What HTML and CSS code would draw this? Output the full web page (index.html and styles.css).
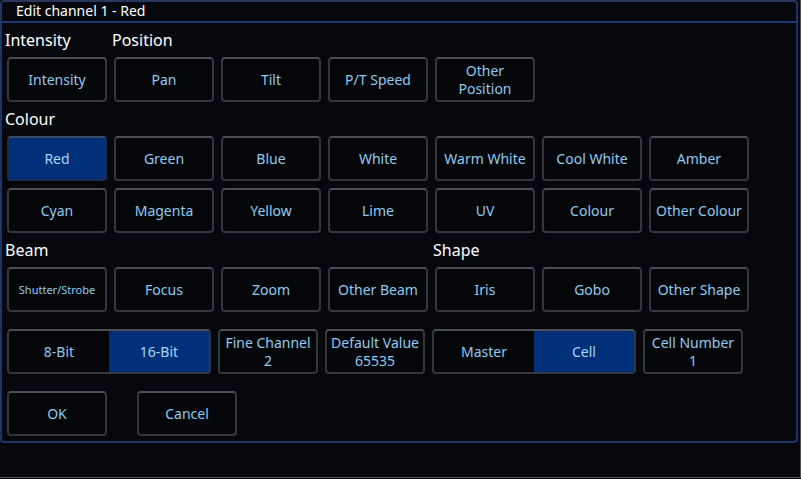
FILE: index.html
```html
<!DOCTYPE html>
<html>
<head>
<meta charset="utf-8">
<link rel="stylesheet" href="styles.css">
</head>
<body>
<div class="window">
  <div class="dialog">
    <div class="titlebar">Edit channel 1 - Red</div>
    <div class="content">
      <div class="grid labels">
        <div class="label">Intensity</div>
        <div class="label">Position</div>
      </div>
      <div class="grid">
        <button class="btn">Intensity</button>
        <button class="btn">Pan</button>
        <button class="btn">Tilt</button>
        <button class="btn">P/T Speed</button>
        <button class="btn two">Other<br>Position</button>
      </div>
      <div class="grid labels">
        <div class="label">Colour</div>
      </div>
      <div class="grid">
        <button class="btn active">Red</button>
        <button class="btn">Green</button>
        <button class="btn">Blue</button>
        <button class="btn">White</button>
        <button class="btn">Warm White</button>
        <button class="btn">Cool White</button>
        <button class="btn">Amber</button>
      </div>
      <div class="grid row2">
        <button class="btn">Cyan</button>
        <button class="btn">Magenta</button>
        <button class="btn">Yellow</button>
        <button class="btn">Lime</button>
        <button class="btn">UV</button>
        <button class="btn">Colour</button>
        <button class="btn">Other Colour</button>
      </div>
      <div class="grid labels">
        <div class="label span4">Beam</div>
        <div class="label">Shape</div>
      </div>
      <div class="grid">
        <button class="btn small">Shutter/Strobe</button>
        <button class="btn">Focus</button>
        <button class="btn">Zoom</button>
        <button class="btn">Other Beam</button>
        <button class="btn">Iris</button>
        <button class="btn">Gobo</button>
        <button class="btn">Other Shape</button>
      </div>
      <div class="row options">
        <div class="segment">
          <div class="seg">8-Bit</div>
          <div class="seg on">16-Bit</div>
        </div>
        <button class="btn two">Fine Channel<br>2</button>
        <button class="btn two">Default Value<br>65535</button>
        <div class="segment">
          <div class="seg">Master</div>
          <div class="seg on">Cell</div>
        </div>
        <button class="btn two">Cell Number<br>1</button>
      </div>
      <div class="row actions">
        <button class="btn">OK</button>
        <button class="btn">Cancel</button>
      </div>
    </div>
  </div>
</div>
</body>
</html>
```
FILE: styles.css
```css
html, body {
  margin: 0;
  padding: 0;
  background: #07080e;
  font-family: "Noto Sans", "Open Sans", sans-serif;
}
.window {
  width: 800px;
  height: 477px;
  border-right: 1px solid #4e4f53;
  border-bottom: 1px solid #4e4f53;
  background: #07080e;
}
.dialog {
  width: 794px;
  height: 439px;
  border: 2px solid #1b3566;
  border-top-color: #26375a;
  border-radius: 4px;
  background: #07080e;
  box-sizing: content-box;
}
.titlebar {
  height: 19px;
  line-height: 18px;
  border-bottom: 2px solid #1b3a72;
  color: #ffffff;
  font-size: 14px;
  padding-left: 14px;
}
.content {
  padding: 0 5px;
}
.grid {
  display: grid;
  grid-template-columns: repeat(7, 100px);
  column-gap: 7px;
}
.row2 {
  margin-top: 7px;
}
.labels {
  height: 34px;
}
.label {
  color: #ffffff;
  font-size: 16px;
  line-height: 34px;
  margin-left: -2px;
}
.span4 {
  grid-column: span 4;
}
.btn {
  height: 45px;
  width: 100px;
  box-sizing: border-box;
  border: 2px solid #34373d;
  border-top-color: #4b4e55;
  border-radius: 4px;
  background: #05060a;
  color: #8fcbee;
  font-family: inherit;
  font-size: 14px;
  line-height: 18px;
  padding: 0;
  margin: 0;
  text-align: center;
}
.btn.two {
  line-height: 18px;
}
.btn.small {
  font-size: 11px;
}
.btn.active {
  background: #00307a;
  border-color: #1b2c4c;
  border-top-color: #3b4b6a;
  color: #a9d6f4;
}
.row {
  display: flex;
  gap: 7px;
}
.options {
  margin-top: 17px;
}
.actions {
  margin-top: 17px;
  gap: 30px;
}
.segment {
  width: 204px;
  height: 45px;
  box-sizing: border-box;
  display: flex;
  border: 2px solid #34373d;
  border-top-color: #4b4e55;
  border-radius: 4px;
  overflow: hidden;
  background: #05060a;
}
.seg {
  flex: 1;
  display: flex;
  align-items: center;
  justify-content: center;
  color: #8fcbee;
  font-size: 14px;
}
.seg.on {
  background: #00307a;
  color: #a9d6f4;
}
```
